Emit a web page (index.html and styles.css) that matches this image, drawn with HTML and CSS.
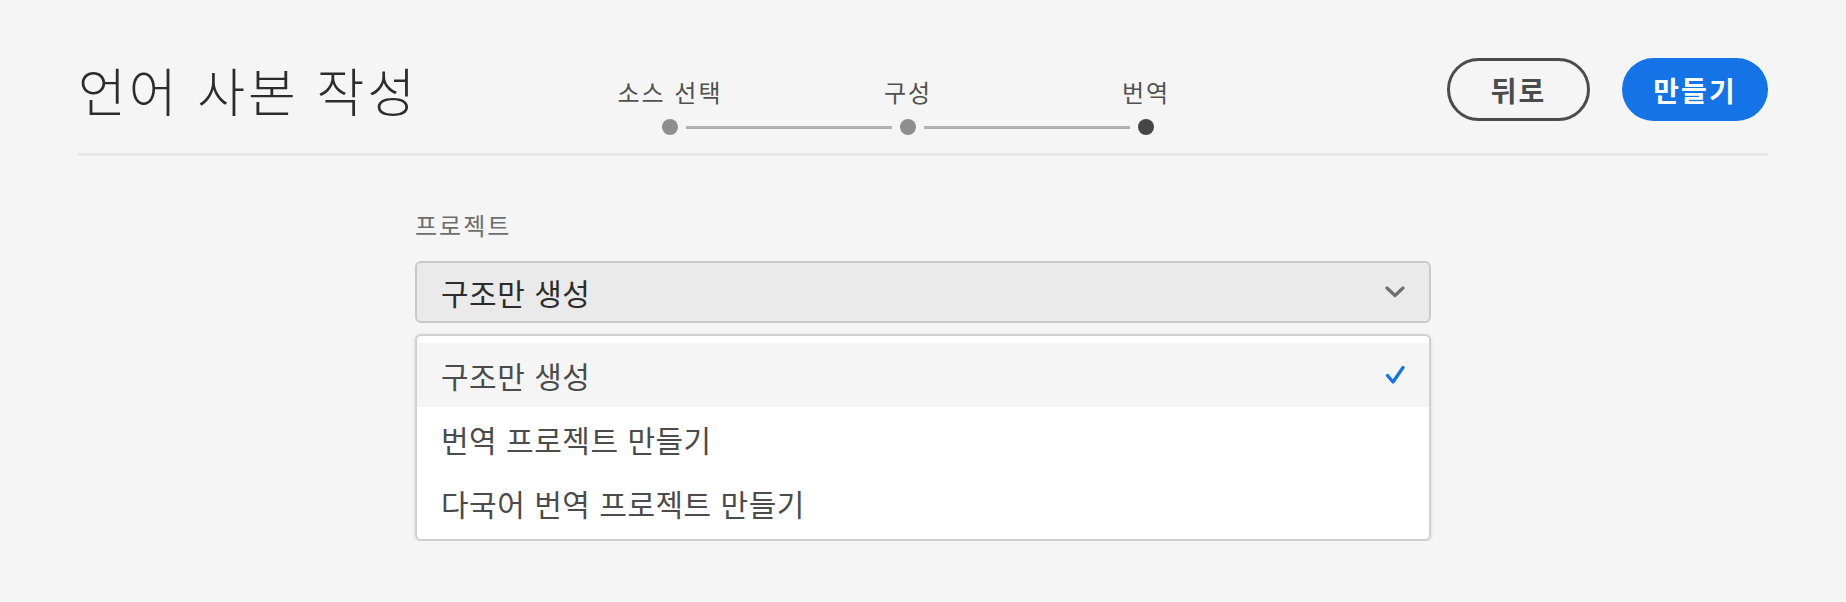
FILE: index.html
```html
<!DOCTYPE html>
<html lang="ko">
<head>
<meta charset="utf-8">
<title>언어 사본 작성</title>
<link rel="stylesheet" href="styles.css">
</head>
<body>
<header class="header">
  <h1 class="title">언어 사본 작성</h1>
  <div class="steps">
    <div class="step-labels">
      <span class="step-label">소스 선택</span>
      <span class="step-label">구성</span>
      <span class="step-label">번역</span>
    </div>
    <div class="track">
      <span class="dot"></span>
      <span class="line"></span>
      <span class="dot"></span>
      <span class="line"></span>
      <span class="dot dot-current"></span>
    </div>
  </div>
  <div class="actions">
    <button class="btn btn-back">뒤로</button>
    <button class="btn btn-create">만들기</button>
  </div>
</header>
<main class="form">
  <label class="field-label">프로젝트</label>
  <div class="select">
    <span class="select-value">구조만 생성</span>
    <svg class="chevron" width="20" height="12" viewBox="0 0 20 12"><path d="M2 2 L10 9.5 L18 2" fill="none" stroke="#6e6e6e" stroke-width="3.2" stroke-linecap="round" stroke-linejoin="round"/></svg>
  </div>
  <ul class="popover">
    <li class="option option-selected">
      <span>구조만 생성</span>
      <svg class="check" width="20" height="20" viewBox="0 0 20 20"><path d="M2.5 10.5 L8 17 L18 2.5" fill="none" stroke="#1473e6" stroke-width="3.2" stroke-linecap="round" stroke-linejoin="round"/></svg>
    </li>
    <li class="option"><span>번역 프로젝트 만들기</span></li>
    <li class="option"><span>다국어 번역 프로젝트 만들기</span></li>
  </ul>
</main>
</body>
</html>
```
FILE: styles.css
```css
* { box-sizing: border-box; }
body {
  margin: 0;
  background: #f5f5f5;
  font-family: "Noto Sans CJK KR", "Noto Sans", sans-serif;
  color: #2c2c2c;
}
.header {
  margin: 0 78px;
  padding: 58px 0 18px;
  display: grid;
  grid-template-columns: 473px 714px 1fr;
  align-items: start;
  border-bottom: 3px solid #e8e8e8;
}
.title {
  margin: 0;
  font-size: 52px;
  font-weight: 300;
  line-height: 63px;
  letter-spacing: 3px;
  color: #2c2c2c;
  white-space: nowrap;
}
.steps {
  margin-top: 22px;
}
.step-labels {
  display: grid;
  grid-template-columns: repeat(3, 238px);
}
.step-label {
  text-align: center;
  font-size: 24px;
  line-height: 24px;
  letter-spacing: 2px;
  color: #505050;
  white-space: nowrap;
}
.track {
  margin-top: 15px;
  padding: 0 111px;
  display: flex;
  align-items: center;
  height: 16px;
}
.dot {
  width: 16px;
  height: 16px;
  border-radius: 50%;
  background: #8e8e8e;
  flex: none;
}
.dot-current { background: #464646; }
.line {
  flex: 1;
  height: 3px;
  margin: 0 8px;
  background: #b1b1b1;
}
.actions {
  justify-self: end;
  display: flex;
  gap: 32px;
}
.btn {
  height: 63px;
  border-radius: 32px;
  font-family: inherit;
  font-size: 28px;
  font-weight: 700;
  letter-spacing: 2px;
  padding: 0;
  cursor: pointer;
}
.btn-back {
  width: 143px;
  background: transparent;
  border: 3px solid #4b4b4b;
  color: #4b4b4b;
}
.btn-create {
  width: 146px;
  background: #1473e6;
  border: none;
  color: #fff;
}
.form {
  width: 1016px;
  margin: 57px auto 0;
  display: flex;
  flex-direction: column;
}
.field-label {
  font-size: 24px;
  line-height: 24px;
  letter-spacing: 2px;
  color: #6e6e6e;
}
.select {
  margin-top: 24px;
  height: 62px;
  background: #eaeaea;
  border: 2px solid #cacaca;
  border-radius: 6px;
  display: flex;
  align-items: center;
  justify-content: space-between;
  padding: 0 24px 0 24px;
}
.select-value {
  font-size: 30px;
  letter-spacing: 0.5px;
  color: #2c2c2c;
}
.chevron { flex: none; }
.popover {
  list-style: none;
  margin: 11px 0 0;
  padding: 7px 0 4px;
  background: #fff;
  border: 2px solid #d0d0d0;
  border-radius: 6px;
  box-shadow: 0 1px 4px rgba(0, 0, 0, 0.12);
}
.option {
  height: 64px;
  display: flex;
  align-items: center;
  justify-content: space-between;
  padding: 0 24px;
  font-size: 30px;
  letter-spacing: 0.5px;
  color: #4b4b4b;
}
.option-selected { background: #f5f5f5; }
.check { flex: none; }
```
